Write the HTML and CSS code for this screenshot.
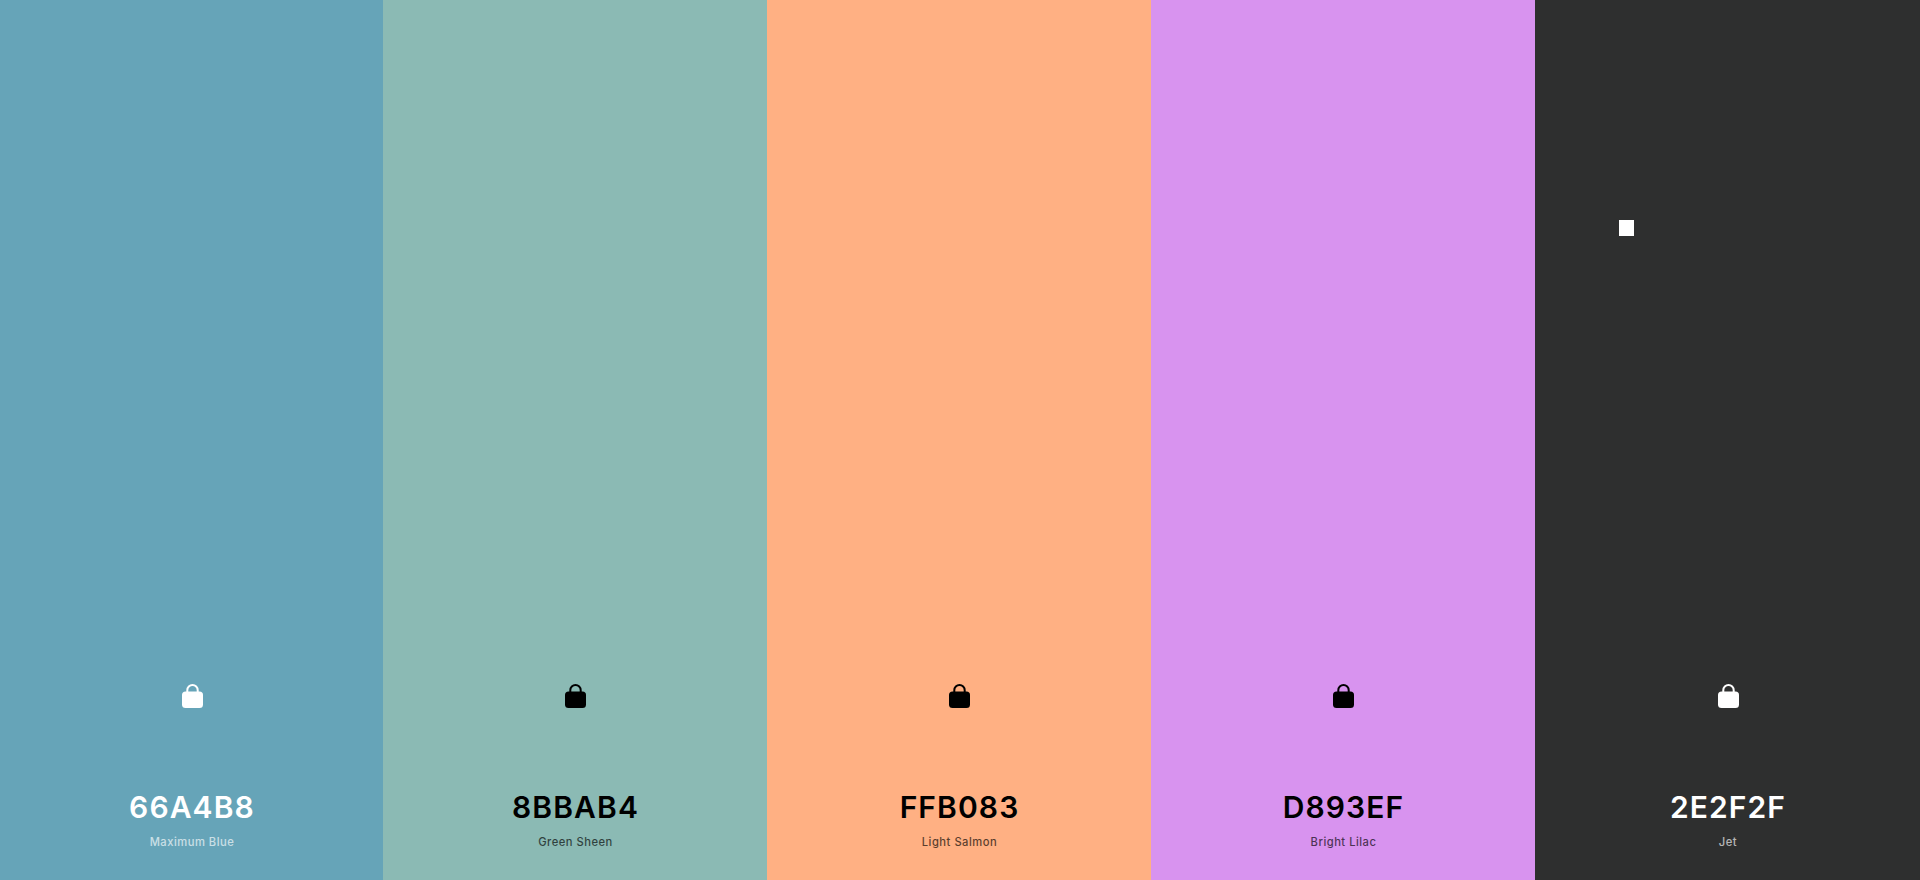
FILE: index.html
```html
<!DOCTYPE html>
<html lang="en">
<head>
<meta charset="utf-8">
<title>Palette</title>
<link rel="stylesheet" href="styles.css">
</head>
<body>
<main class="palette">
  <section class="swatch blue light">
    <svg class="lock" viewBox="0 0 21 24"><path class="shackle" d="M5.3 9V6.2a5.2 5.2 0 0 1 10.4 0V9"/><rect x="0" y="7.5" width="21" height="16.5" rx="3.5"/></svg>
    <div class="hex">66A4B8</div><div class="name">Maximum Blue</div>
  </section>
  <section class="swatch green dark">
    <svg class="lock" viewBox="0 0 21 24"><path class="shackle" d="M5.3 9V6.2a5.2 5.2 0 0 1 10.4 0V9"/><rect x="0" y="7.5" width="21" height="16.5" rx="3.5"/></svg>
    <div class="hex">8BBAB4</div><div class="name">Green Sheen</div>
  </section>
  <section class="swatch salmon dark">
    <svg class="lock" viewBox="0 0 21 24"><path class="shackle" d="M5.3 9V6.2a5.2 5.2 0 0 1 10.4 0V9"/><rect x="0" y="7.5" width="21" height="16.5" rx="3.5"/></svg>
    <div class="hex">FFB083</div><div class="name">Light Salmon</div>
  </section>
  <section class="swatch lilac dark">
    <svg class="lock" viewBox="0 0 21 24"><path class="shackle" d="M5.3 9V6.2a5.2 5.2 0 0 1 10.4 0V9"/><rect x="0" y="7.5" width="21" height="16.5" rx="3.5"/></svg>
    <div class="hex">D893EF</div><div class="name">Bright Lilac</div>
  </section>
  <section class="swatch jet light">
    <span class="marker"></span>
    <svg class="lock" viewBox="0 0 21 24"><path class="shackle" d="M5.3 9V6.2a5.2 5.2 0 0 1 10.4 0V9"/><rect x="0" y="7.5" width="21" height="16.5" rx="3.5"/></svg>
    <div class="hex">2E2F2F</div><div class="name">Jet</div>
  </section>
</main>
</body>
</html>
```
FILE: styles.css
```css
html, body { margin: 0; height: 100%; }
body { font-family: Inter, "Liberation Sans", sans-serif; overflow: hidden; }
.palette { display: grid; grid-template-columns: 383px repeat(3, 384px) 385px; height: 880px; }
.swatch { position: relative; display: flex; flex-direction: column; align-items: center; justify-content: flex-end; padding: 0 0 31px 1px; box-sizing: border-box; }
.blue { background: #66a4b8; }
.green { background: #8bbab4; }
.salmon { background: #ffb083; }
.lilac { background: #d893ef; }
.jet { background: #2e2f2f; }
.light { color: #fff; }
.dark { color: #000; }
.lock { width: 21px; height: 24px; margin-bottom: 81px; fill: currentColor; }
.lock .shackle { fill: none; stroke: currentColor; stroke-width: 2; }
.hex { font-size: 30px; font-weight: 600; line-height: 36px; letter-spacing: 1.1px; margin-bottom: 10px; }
.name { font-size: 11.2px; font-weight: 500; line-height: 14px; letter-spacing: 0.5px; opacity: 0.65; }
.marker { position: absolute; left: 84px; top: 220px; width: 15px; height: 16px; background: #fff; }
```
